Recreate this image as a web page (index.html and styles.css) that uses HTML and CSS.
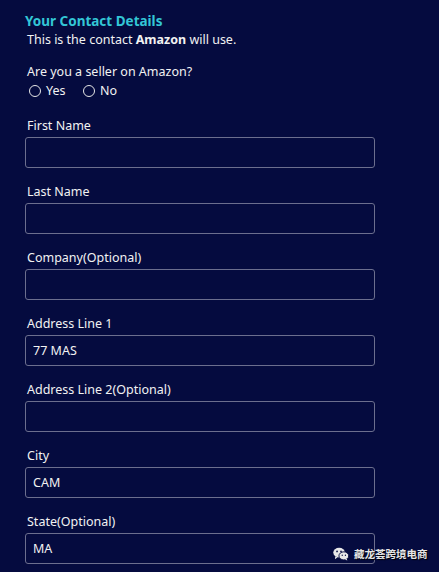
FILE: index.html
```html
<!DOCTYPE html>
<html lang="en">
<head>
    <meta charset="UTF-8">
    <meta name="viewport" content="width=device-width, initial-scale=1.0">
    <title>Your Contact Details</title>
    <link rel="stylesheet" href="styles.css">
</head>
<body>
    <div class="container">
        <h2>Your Contact Details</h2>
        <p class="intro">This is the contact <b>Amazon</b> will use.</p>

        <form class="contact-form">
            <!-- Seller question -->
            <div class="seller">
                <p>Are you a seller on Amazon?</p>
                <div class="radios">
                    <label><span class="radio"></span> Yes</label>
                    <label><span class="radio"></span> No</label>
                </div>
            </div>

            <div class="field">
                <label for="first-name">First Name</label>
                <input type="text" id="first-name">
            </div>

            <div class="field">
                <label for="last-name">Last Name</label>
                <input type="text" id="last-name">
            </div>

            <div class="field">
                <label for="company">Company(Optional)</label>
                <input type="text" id="company">
            </div>

            <div class="field">
                <label for="address1">Address Line 1</label>
                <input type="text" id="address1" value="77 MAS">
            </div>

            <div class="field">
                <label for="address2">Address Line 2(Optional)</label>
                <input type="text" id="address2">
            </div>

            <div class="field">
                <label for="city">City</label>
                <input type="text" id="city" value="CAM">
            </div>

            <div class="field">
                <label for="state">State(Optional)</label>
                <input type="text" id="state" value="MA">
            </div>
        </form>
    </div>

    <!-- Watermark -->
    <div class="watermark">
        <svg width="16" height="14" viewBox="0 0 17 14">
            <ellipse cx="6.5" cy="5.5" rx="6.2" ry="5.2" fill="#e8e8e8"/>
            <path d="M2.5 9.5 L2 12.5 L5 10.5 Z" fill="#e8e8e8"/>
            <ellipse cx="11.5" cy="9" rx="5.2" ry="4.3" fill="#e8e8e8" stroke="#050b3f" stroke-width="1"/>
            <path d="M14.5 12 L15.2 13.8 L12.8 12.8 Z" fill="#e8e8e8"/>
            <circle cx="4.3" cy="4.3" r="0.9" fill="#050b3f"/>
            <circle cx="8.5" cy="4.3" r="0.9" fill="#050b3f"/>
            <circle cx="9.8" cy="8.3" r="0.7" fill="#050b3f"/>
            <circle cx="13.2" cy="8.3" r="0.7" fill="#050b3f"/>
        </svg>
        <span>藏龙荟跨境电商</span>
    </div>
</body>
</html>
```

FILE: styles.css
```css
body {
    margin: 0;
    font-family: 'Noto Sans', 'Noto Sans CJK SC', sans-serif;
    font-size: 12.5px;
    line-height: 18px;
    color: #f2f2f2;
    background-color: #050b3f;
}

.container {
    padding: 12px 0 0 25px;
    width: 350px;
}

h2 {
    margin: 0;
    font-size: 13.5px;
    line-height: 18px;
    color: #33c6d6;
}

.intro {
    margin: 1px 0 0 2px;
}

.contact-form {
    display: flex;
    flex-direction: column;
    gap: 15px;
}

.seller {
    margin-top: 14px;
    margin-left: 2px;
    margin-bottom: 2px;
}

.seller p {
    margin: 0;
}

.radios {
    display: flex;
    gap: 10px;
    margin-top: 1px;
    margin-left: 2px;
}

.radios label {
    display: flex;
    align-items: center;
    gap: 5px;
    width: 44px;
}

.radio {
    width: 10px;
    height: 10px;
    border: 1px solid #e6e6e6;
    border-radius: 50%;
}

.field {
    display: flex;
    flex-direction: column;
    gap: 2px;
}

.field label {
    margin-left: 2px;
}

.field input {
    box-sizing: border-box;
    width: 350px;
    height: 31px;
    padding: 0 7px;
    font-family: inherit;
    font-size: 12.5px;
    color: #f2f2f2;
    background-color: #050b3f;
    border: 1px solid #6c6f8e;
    border-radius: 3px;
}

.watermark {
    position: absolute;
    left: 333px;
    top: 545px;
    display: flex;
    align-items: center;
    gap: 5px;
    font-size: 10.5px;
    font-weight: bold;
    color: #e6e6e6;
    text-shadow: 1px 1px 1px #000;
}
```
